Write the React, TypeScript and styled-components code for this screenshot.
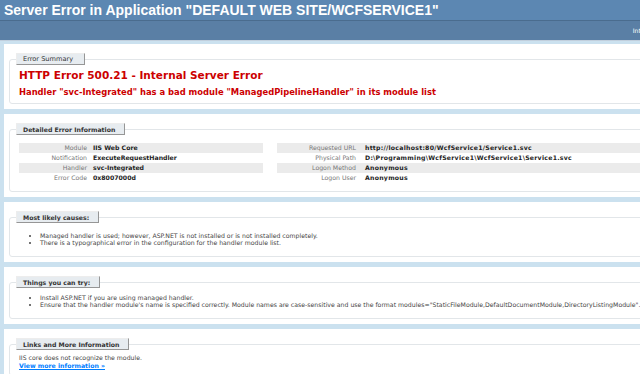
import React from "react";
import styled, { createGlobalStyle } from "styled-components";

const GlobalStyle = createGlobalStyle`
  html, body {
    margin: 0;
    padding: 0;
    overflow: hidden;
  }
  body {
    background: #cbe1ef;
    font-family: "DejaVu Sans", Verdana, sans-serif;
    font-size: 6.2px;
    color: #222;
  }
`;

const Page = styled.div`
  width: 745px;
`;

const Header = styled.div`
  height: 20px;
  padding-left: 4px;
  background: #5c87b2;
`;

const Title = styled.h1`
  margin: 0;
  font-family: "Liberation Sans", Arial, sans-serif;
  font-size: 14px;
  line-height: 20px;
  font-weight: bold;
  color: #fff;
  white-space: nowrap;
`;

const ServerVersion = styled.div`
  height: 19px;
  display: flex;
  align-items: center;
  justify-content: flex-end;
  padding-right: 10px;
  background: #5a7fa5;
  border-top: 1px solid #4a6c8e;
  border-bottom: 1px solid #c1cfdd;
  color: #fff;
`;

const Content = styled.div`
  display: flex;
  flex-direction: column;
  gap: 5px;
  margin: 3px 0 0 4px;
`;

const Section = styled.div`
  width: 727px;
  box-sizing: border-box;
  padding: 5px;
  background: #fff;
`;

const Fieldset = styled.fieldset`
  margin: 4px 0 0;
  padding: 0 9px 5px;
  min-width: 0;
  border: 1px solid #e2e6e9;
  border-radius: 3px;
`;

const Legend = styled.legend<{ $plain?: boolean }>`
  margin-left: -3px;
  padding: 2px ${({ $plain }) => ($plain ? 11 : 9)}px 1px 6px;
  line-height: 7px;
  font-size: ${({ $plain }) => ($plain ? 6.6 : 6.2)}px;
  font-weight: ${({ $plain }) => ($plain ? "normal" : "bold")};
  color: #333;
  background: #e7ecf0;
  border-top: 1px solid #ededed;
  border-left: 1px solid #ededed;
  border-right: 1px solid #969696;
  border-bottom: 1px solid #969696;
`;

const ErrorTitle = styled.h2`
  margin: 4px 0 0;
  font-size: 10.5px;
  line-height: 13px;
  color: #cc0000;
`;

const ErrorReason = styled.h3`
  margin: 4px 0 0;
  font-size: 8.4px;
  line-height: 12px;
  color: #cc0000;
`;

const Details = styled.div`
  display: grid;
  grid-template-columns: 244px 439px;
  column-gap: 14px;
  margin: 8px 0 3px;
`;

const Table = styled.table<{ $labelWidth: number; $gap: number; $spacing: number }>`
  width: 100%;
  border-collapse: collapse;

  th {
    width: ${({ $labelWidth }) => $labelWidth}px;
    padding: 0 ${({ $gap }) => $gap}px 0 0;
    text-align: right;
    font-weight: normal;
    color: #777;
  }
  td {
    padding: 0 0 0 1px;
    font-weight: bold;
    letter-spacing: ${({ $spacing }) => $spacing}px;
    color: #222;
    white-space: nowrap;
  }
  th, td {
    height: 10px;
    line-height: 10px;
    vertical-align: middle;
  }
  tr.alt th,
  tr.alt td {
    background: #ebebeb;
  }
`;

const List = styled.ul<{ $top: number }>`
  margin: ${({ $top }) => $top}px 0 5px;
  padding-left: 21px;
  line-height: 6.6px;
  color: #444;
  white-space: nowrap;
`;

const Text = styled.p`
  margin: 4px 0 0;
  line-height: 7px;
  color: #444;
`;

const MoreLink = styled.a`
  display: inline-block;
  line-height: 9px;
  color: #007eff;
  font-weight: bold;
`;

type Row = [string, string];

const leftRows: Row[] = [
  ["Module", "IIS Web Core"],
  ["Notification", "ExecuteRequestHandler"],
  ["Handler", "svc-Integrated"],
  ["Error Code", "0x8007000d"],
];

const rightRows: Row[] = [
  ["Requested URL", "http://localhost:80/WcfService1/Service1.svc"],
  ["Physical Path", "D:\\Programming\\WcfService1\\WcfService1\\Service1.svc"],
  ["Logon Method", "Anonymous"],
  ["Logon User", "Anonymous"],
];

interface InfoTableProps {
  rows: Row[];
  labelWidth: number;
  gap: number;
  spacing?: number;
}

const InfoTable = ({ rows, labelWidth, gap, spacing = 0 }: InfoTableProps) => (
  <Table $labelWidth={labelWidth} $gap={gap} $spacing={spacing}>
    <tbody>
      {rows.map(([label, value], i) => (
        <tr key={label} className={i % 2 === 0 ? "alt" : undefined}>
          <th>{label}</th>
          <td>{value}</td>
        </tr>
      ))}
    </tbody>
  </Table>
);

export default function App() {
  return (
    <Page>
      <GlobalStyle />
      <Header>
        <Title>Server Error in Application "DEFAULT WEB SITE/WCFSERVICE1"</Title>
      </Header>
      <ServerVersion>Internet Information Services 7.5</ServerVersion>
      <Content>
        <Section>
          <Fieldset>
            <Legend $plain>Error Summary</Legend>
            <ErrorTitle>HTTP Error 500.21 - Internal Server Error</ErrorTitle>
            <ErrorReason>
              Handler "svc-Integrated" has a bad module "ManagedPipelineHandler" in its module list
            </ErrorReason>
          </Fieldset>
        </Section>

        <Section>
          <Fieldset>
            <Legend>Detailed Error Information</Legend>
            <Details>
              <InfoTable rows={leftRows} labelWidth={68} gap={5} />
              <InfoTable rows={rightRows} labelWidth={79} gap={8} spacing={0.25} />
            </Details>
          </Fieldset>
        </Section>

        <Section>
          <Fieldset>
            <Legend>Most likely causes:</Legend>
            <List $top={10}>
              <li>Managed handler is used; however, ASP.NET is not installed or is not installed completely.</li>
              <li>There is a typographical error in the configuration for the handler module list.</li>
            </List>
          </Fieldset>
        </Section>

        <Section>
          <Fieldset>
            <Legend>Things you can try:</Legend>
            <List $top={7}>
              <li>Install ASP.NET if you are using managed handler.</li>
              <li>
                Ensure that the handler module's name is specified correctly. Module names are
                case-sensitive and use the format
                modules="StaticFileModule,DefaultDocumentModule,DirectoryListingModule".
              </li>
            </List>
          </Fieldset>
        </Section>

        <Section>
          <Fieldset>
            <Legend>Links and More Information</Legend>
            <Text>IIS core does not recognize the module.</Text>
            <MoreLink href="#">View more information »</MoreLink>
          </Fieldset>
        </Section>
      </Content>
    </Page>
  );
}
